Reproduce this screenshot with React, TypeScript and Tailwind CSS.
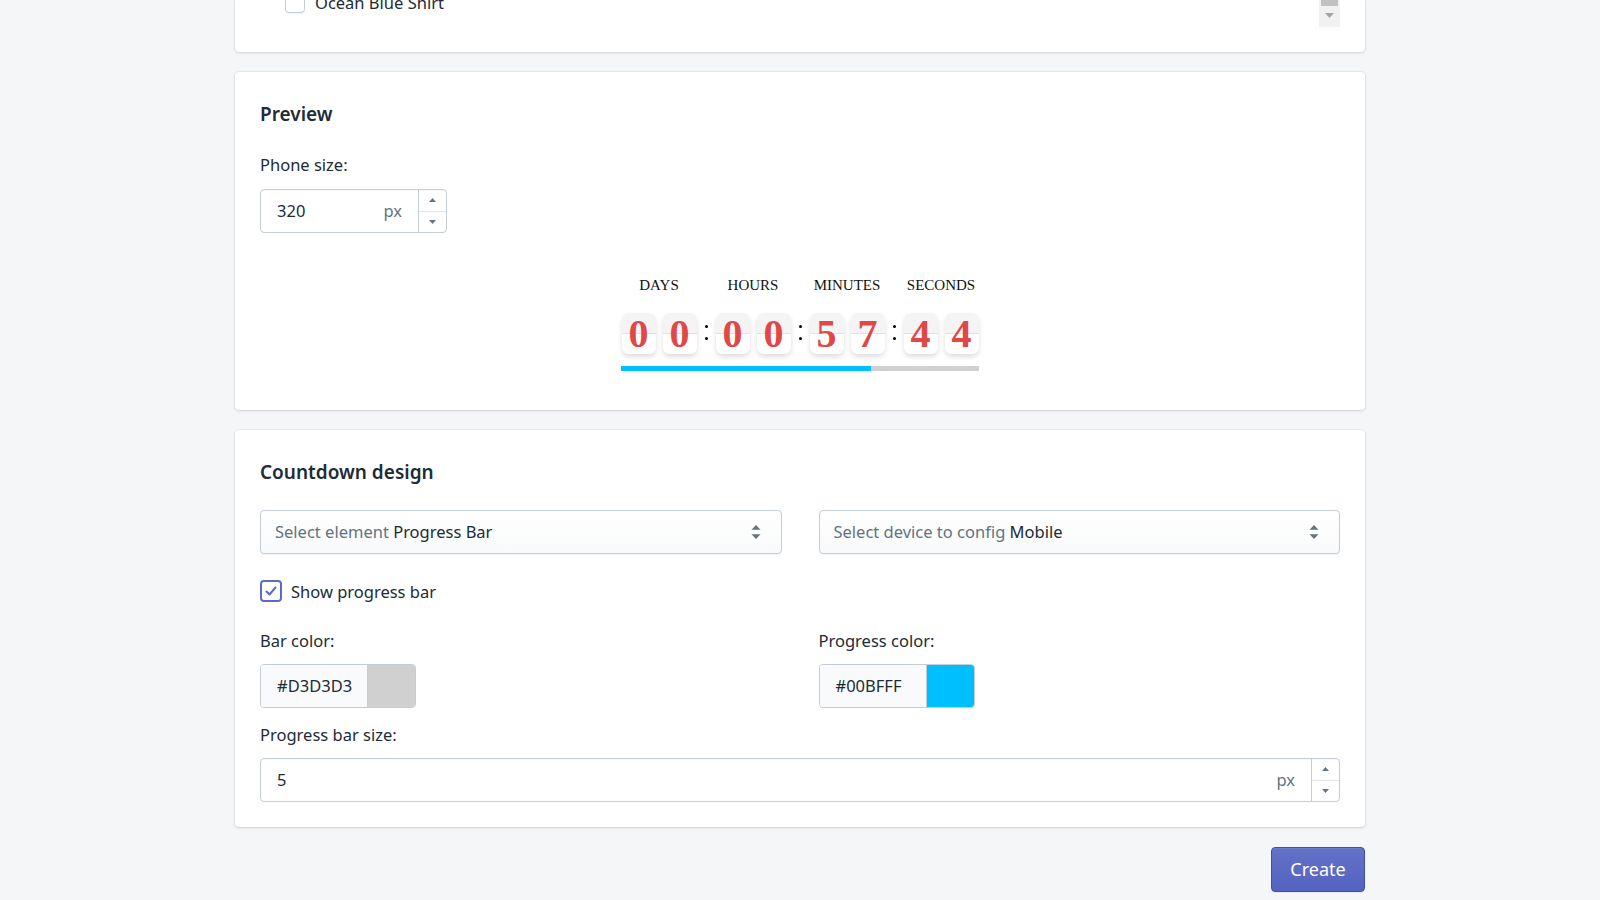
import React from "react";

const card =
  "bg-white rounded-[4px] shadow-[0_0_0_1px_rgba(63,63,68,0.05),0_1px_3px_0_rgba(63,63,68,0.15)]";

function Caret({ up }: { up?: boolean }) {
  return (
    <svg width="7" height="4" viewBox="0 0 7 4" className="fill-[#637381]">
      {up ? <path d="M0 4L3.5 0L7 4Z" /> : <path d="M0 0H7L3.5 4Z" />}
    </svg>
  );
}

function NumberField({ value, className }: { value: string; className: string }) {
  return (
    <div
      className={`flex h-[44px] rounded-[4px] border border-[#c4cdd5] bg-white shadow-[inset_0_1px_0_0_rgba(99,115,129,0.05)] ${className}`}
    >
      <div className="flex-1 flex items-center pl-[16px] pr-[16px] text-[#212b36]">
        <span className="flex-1">{value}</span>
        <span className="text-[#637381]">px</span>
      </div>
      <div className="w-[28px] flex flex-col border-l border-[#c4cdd5]">
        <div className="flex-1 flex items-center justify-center border-b border-[#dfe3e8]">
          <Caret up />
        </div>
        <div className="flex-1 flex items-center justify-center">
          <Caret />
        </div>
      </div>
    </div>
  );
}

function SelectBox({ hint, value }: { hint: string; value: string }) {
  return (
    <div className="flex items-center h-[44px] rounded-[4px] border border-[#c4cdd5] bg-gradient-to-b from-white to-[#f9fafb] shadow-[0_1px_0_0_rgba(22,29,37,0.05)] pl-[14px] pr-[10px]">
      <span className="flex-1">
        <span className="text-[#637381]">{hint} </span>
        <span className="text-[#212b36]">{value}</span>
      </span>
      <svg width="30" height="30" viewBox="0 0 20 20" className="fill-[#637381]">
        <path d="M13 8.5l-3-3.2-3 3.2h6zm0 3L10 14.7 7 11.5h6z" />
      </svg>
    </div>
  );
}

function ColorField({ hex, swatch }: { hex: string; swatch: string }) {
  return (
    <div className="mt-[11px] flex h-[44px] w-fit rounded-[4px] border border-[#c4cdd5] overflow-hidden">
      <div className="w-[106px] bg-[#f9fafb] flex items-center pl-[16px] text-[#212b36]">{hex}</div>
      <div className={`w-[48px] border-l border-[#c4cdd5] ${swatch}`} />
    </div>
  );
}

function Digit({ n }: { n: string }) {
  return (
    <div className="w-[34px] h-[41px] rounded-[7px] flex items-center justify-center bg-[linear-gradient(to_bottom,#f4f4f4_20px,#e2e2e2_20px,#e2e2e2_21px,#ffffff_21px)] shadow-[0_3px_5px_rgba(0,0,0,0.13)] font-['Liberation_Serif',serif] font-bold text-[40px] leading-[41px] text-[#e04848]">
      {n}
    </div>
  );
}

function Group({ a, b }: { a: string; b: string }) {
  return (
    <div className="w-[75px] flex justify-between">
      <Digit n={a} />
      <Digit n={b} />
    </div>
  );
}

function Colon() {
  return (
    <div className="w-[19px] flex flex-col items-center justify-center gap-[9px] pb-[3px]">
      <span className="w-[3px] h-[3px] rounded-full bg-black" />
      <span className="w-[3px] h-[3px] rounded-full bg-black" />
    </div>
  );
}

export default function App() {
  const labels = ["DAYS", "HOURS", "MINUTES", "SECONDS"];
  return (
    <div className="min-h-screen bg-[#f4f6f8] font-['Noto_Sans',sans-serif] text-[16.5px] text-[#212b36] overflow-hidden">
      <div className="w-[1130px] mx-auto pb-[8px]">
        {/* product list, scrolled */}
        <div className={`${card} rounded-t-none px-[25px] pb-[25px]`}>
          <div className="flex h-[27px]">
            <div className="flex-1">
              <label className="flex items-center gap-[10px] pl-[25px] -mt-[7px] h-[20px]">
                <span className="w-[20px] h-[20px] rounded-[4px] border border-[#c4cdd5] bg-white shadow-[0_1px_0_0_rgba(22,29,37,0.05)]" />
                <span>Ocean Blue Shirt</span>
              </label>
            </div>
            <div className="w-[21px] bg-[#f1f1f1] flex flex-col items-center">
              <div className="w-[17px] h-[6px] bg-[#c1c1c1]" />
              <svg width="9" height="5" viewBox="0 0 9 5" className="mt-[7px] fill-[#a3a3a3]">
                <path d="M0 0H9L4.5 5Z" />
              </svg>
            </div>
          </div>
        </div>

        {/* preview */}
        <div className={`${card} mt-5 px-[25px] pt-[27px] pb-[39px]`}>
          <h2 className="text-[19px] leading-[30px] font-semibold">Preview</h2>
          <div className="mt-[23px] leading-[25px]">Phone size:</div>
          <NumberField value="320" className="mt-[12px] w-[187px]" />

          <div className="mt-[42px] flex justify-center font-['Liberation_Serif',serif] text-[15px] leading-[20px] text-[#111]">
            {labels.map((l, i) => (
              <React.Fragment key={l}>
                {i > 0 && <div className="w-[19px]" />}
                <div className="w-[75px] text-center whitespace-nowrap">{l}</div>
              </React.Fragment>
            ))}
          </div>
          <div className="mt-[18px] flex justify-center">
            <Group a="0" b="0" />
            <Colon />
            <Group a="0" b="0" />
            <Colon />
            <Group a="5" b="7" />
            <Colon />
            <Group a="4" b="4" />
          </div>
          <div className="mt-[12px] flex justify-center">
            <div className="w-[358px] h-[5px] bg-[#d0d0d0]">
              <div className="h-full w-[250px] bg-[#00bfff]" />
            </div>
          </div>
        </div>

        {/* design */}
        <div className={`${card} mt-5 px-[25px] pt-[27px] pb-[25px]`}>
          <h2 className="text-[19px] leading-[30px] font-semibold">Countdown design</h2>
          <div className="mt-[23px] grid grid-cols-2 gap-x-[37px]">
            <SelectBox hint="Select element" value="Progress Bar" />
            <SelectBox hint="Select device to config" value="Mobile" />
          </div>
          <label className="mt-[26px] flex items-center h-[22px]">
            <span className="w-[22px] h-[22px] rounded-[4px] border-2 border-[#5c6ac4] bg-white flex items-center justify-center">
              <svg width="14" height="14" viewBox="0 0 14 14" fill="none" className="stroke-[#5c6ac4]">
                <path d="M2.5 7.5L5.5 10.5L11.5 3.5" strokeWidth="2" strokeLinecap="round" strokeLinejoin="round" />
              </svg>
            </span>
            <span className="ml-[9px] mt-[3px]">Show progress bar</span>
          </label>
          <div className="mt-[26px] grid grid-cols-2 gap-x-[37px]">
            <div>
              <div className="leading-[25px]">Bar color:</div>
              <ColorField hex="#D3D3D3" swatch="bg-[#d0d0d0]" />
            </div>
            <div>
              <div className="leading-[25px]">Progress color:</div>
              <ColorField hex="#00BFFF" swatch="bg-[#00bfff]" />
            </div>
          </div>
          <div className="mt-[14px] leading-[25px]">Progress bar size:</div>
          <NumberField value="5" className="mt-[11px]" />
        </div>

        <div className="mt-5 flex justify-end">
          <button className="h-[45px] w-[94px] rounded-[4px] border border-[#3f4eae] bg-gradient-to-b from-[#6371c7] to-[#5563c1] shadow-[inset_0_1px_0_0_#6f7bcb,0_1px_0_0_rgba(22,29,37,0.05)] text-white text-[18px]">
            Create
          </button>
        </div>
      </div>
    </div>
  );
}
